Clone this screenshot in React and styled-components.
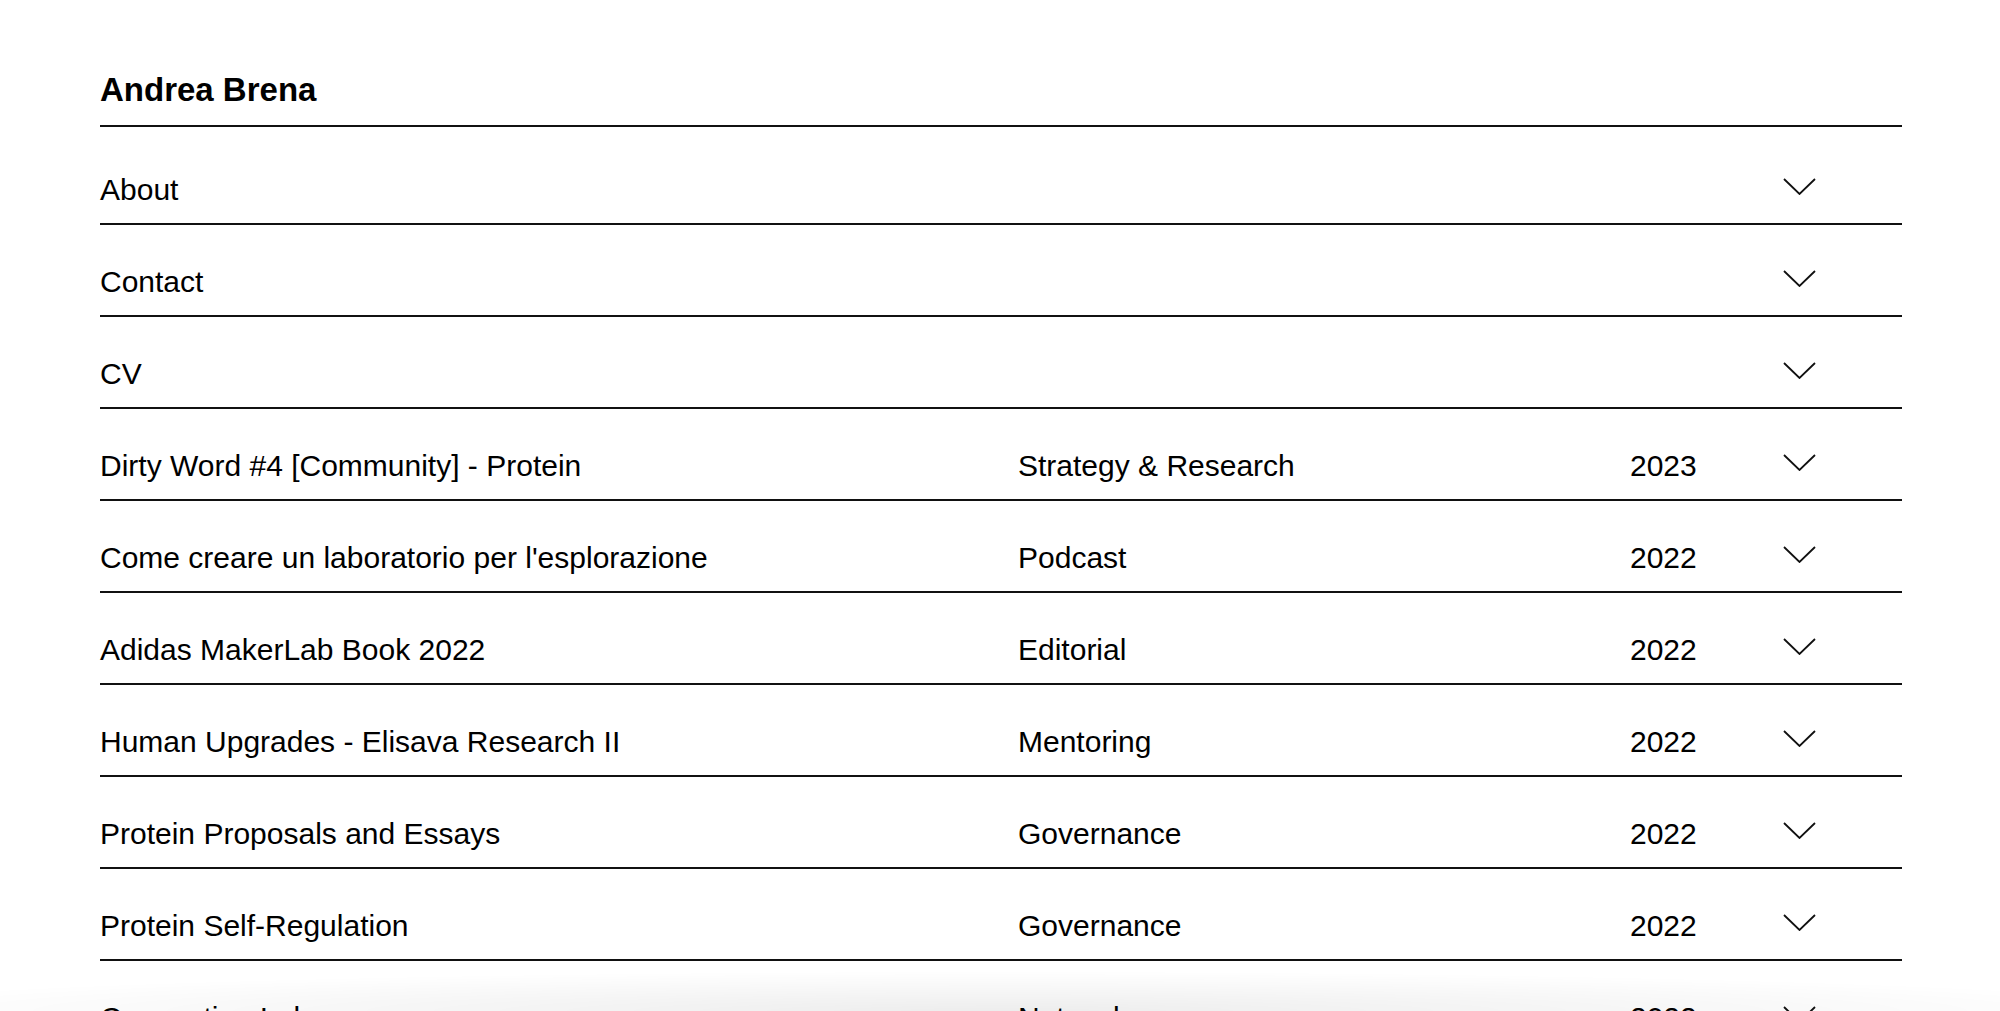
import React from 'react'
import styled, { createGlobalStyle } from 'styled-components'

const GlobalStyle = createGlobalStyle`
    html, body {
        margin: 0;
        padding: 0;
        background: #fff;
        color: #000;
        font-family: "Liberation Sans", Arial, Helvetica, sans-serif;
    }
`

// Layout
const Page = styled.main`
    padding: 0 98px 0 100px;
`

const Header = styled.header`
    padding: 70px 0 15px;
    border-bottom: 2px solid #111;
    margin-bottom: 6px;
`

const Title = styled.h1`
    margin: 0;
    font-size: 33px;
    line-height: 40px;
    font-weight: 700;
`

const List = styled.ul`
    list-style: none;
    margin: 0;
    padding: 0;
`

const Row = styled.li`
    display: grid;
    grid-template-columns: 918px 612px 1fr 33px;
    padding: 39px 86px 15px 0;
    border-bottom: 2px solid #111;
    font-size: 30px;
    line-height: 36px;
    cursor: pointer;
`

const Cell = styled.span`
    white-space: nowrap;
`

const Chevron = styled.svg`
    width: 33px;
    height: 17px;
    margin-top: 6px;
    display: block;
`

// Sombra inferior de la ventana
const BottomShade = styled.div`
    position: fixed;
    left: 0;
    right: 0;
    bottom: 0;
    height: 40px;
    pointer-events: none;
    background: radial-gradient(ellipse 60% 100% at 50% 100%, rgba(0, 0, 0, 0.07), rgba(0, 0, 0, 0) 100%);
`

const sections = ['About', 'Contact', 'CV']

const projects = [
    ['Dirty Word #4 [Community] - Protein', 'Strategy & Research', '2023'],
    ["Come creare un laboratorio per l'esplorazione", 'Podcast', '2022'],
    ['Adidas MakerLab Book 2022', 'Editorial', '2022'],
    ['Human Upgrades - Elisava Research II', 'Mentoring', '2022'],
    ['Protein Proposals and Essays', 'Governance', '2022'],
    ['Protein Self-Regulation', 'Governance', '2022'],
    ['Connection Lab', 'Network', '2022'],
    ['Protein Community', 'Strategy & Research', '2021'],
]

const Arrow = () => (
    <Chevron viewBox="0 0 33 17" fill="none">
        <polyline points="1,1 16.5,16 32,1" stroke="#111" strokeWidth="1.8" />
    </Chevron>
)

const App = () => {
    return (
        <>
            <GlobalStyle />
            <Page>
                <Header>
                    <Title>Andrea Brena</Title>
                </Header>

                <List>
                    {sections.map((name) => (
                        <Row key={name}>
                            <Cell>{name}</Cell>
                            <Cell />
                            <Cell />
                            <Arrow />
                        </Row>
                    ))}
                    {projects.map(([title, kind, year]) => (
                        <Row key={title}>
                            <Cell>{title}</Cell>
                            <Cell>{kind}</Cell>
                            <Cell>{year}</Cell>
                            <Arrow />
                        </Row>
                    ))}
                </List>
            </Page>
            <BottomShade />
        </>
    )
}

export default App
